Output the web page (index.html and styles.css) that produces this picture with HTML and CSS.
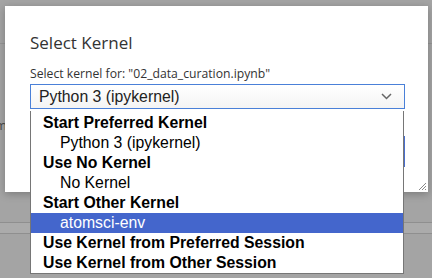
FILE: index.html
```html
<!DOCTYPE html>
<html>
<head>
<meta charset="utf-8">
<link rel="stylesheet" href="styles.css">
</head>
<body>
<div class="backdrop">
  <div class="bg-line l1"></div>
  <span class="bg-text">m</span>
  <div class="bg-band"></div>
</div>
<div class="dialog">
  <div class="title">Select Kernel</div>
  <div class="label">Select kernel for: "02_data_curation.ipynb"</div>
  <div class="select">
    <span class="select-text">Python 3 (ipykernel)</span>
    <svg class="chev" width="11" height="7" viewBox="0 0 11 7"><path d="M1 1 L5.5 5.5 L10 1" fill="none" stroke="#666" stroke-width="1.5"/></svg>
  </div>
  <div class="buttons">
    <button class="btn">Select</button>
  </div>
  <svg class="grip" width="9" height="9" viewBox="0 0 9 9"><path d="M8 1 L1 8 M8 4 L4 8 M8 7 L7 8" stroke="#888" stroke-width="1"/></svg>
</div>
<ul class="list">
  <li class="group">Start Preferred Kernel</li>
  <li class="opt">Python 3 (ipykernel)</li>
  <li class="group">Use No Kernel</li>
  <li class="opt">No Kernel</li>
  <li class="group">Start Other Kernel</li>
  <li class="opt sel">atomsci-env</li>
  <li class="group">Use Kernel from Preferred Session</li>
  <li class="group">Use Kernel from Other Session</li>
</ul>
</body>
</html>
```
FILE: styles.css
```css
html, body {
  margin: 0;
  padding: 0;
  width: 432px;
  height: 278px;
  overflow: hidden;
  background: #a4a4a4;
  font-family: "Open Sans", "Noto Sans", sans-serif;
}
.backdrop {
  position: absolute;
  inset: 0;
}
.bg-line {
  position: absolute;
  left: 0;
  right: 0;
  height: 1px;
  background: #959595;
}
.l1 { top: 43px; }
.bg-text {
  position: absolute;
  left: -5px;
  top: 116px;
  font-size: 13px;
  color: #4a4a4a;
}
.bg-band {
  position: absolute;
  left: 0;
  right: 0;
  top: 222px;
  height: 10px;
  border-top: 1px solid #8f8f8f;
  border-bottom: 1px solid #8f8f8f;
  background: #ababab;
}
.dialog {
  position: absolute;
  left: 5px;
  top: 6px;
  width: 423px;
  height: 186px;
  box-sizing: border-box;
  background: #fff;
  padding: 26px 23px 0 25px;
  box-shadow: 0 2px 8px rgba(0,0,0,0.25);
}
.title {
  font-size: 17px;
  color: #333;
  line-height: 22px;
}
.label {
  margin-top: 12px;
  font-size: 12.2px;
  color: #333;
  line-height: 16px;
}
.select {
  margin-top: 2px;
  height: 25px;
  box-sizing: border-box;
  border: 1px solid #4a80d8;
  background: linear-gradient(#fff, #f4f4f4);
  display: flex;
  align-items: center;
  justify-content: space-between;
  padding: 0 12px 0 8px;
}
.select-text {
  font-family: "Liberation Sans", Arial, sans-serif;
  font-size: 15.8px;
  color: #222;
}
.buttons {
  display: flex;
  justify-content: flex-end;
  margin-top: 27px;
}
.btn {
  height: 31px;
  width: 80px;
  border: 1px solid #4a6fcf;
  background: #fff;
  font-family: inherit;
}
.grip {
  position: absolute;
  right: 1px;
  bottom: 1px;
}
.list {
  position: absolute;
  left: 30px;
  top: 111px;
  width: 374px;
  margin: 0;
  padding: 2px 0 0;
  list-style: none;
  box-sizing: border-box;
  border: 1px solid #767676;
  border-top: none;
  background: #fff;
  font-family: "Liberation Sans", Arial, sans-serif;
  font-size: 15.8px;
  color: #000;
}
.list li {
  height: 20px;
  line-height: 20px;
  white-space: nowrap;
}
.group {
  font-weight: bold;
  padding-left: 12px;
}
.opt {
  padding-left: 29px;
}
.sel {
  background: #4466cc;
  color: #fff;
}
```
